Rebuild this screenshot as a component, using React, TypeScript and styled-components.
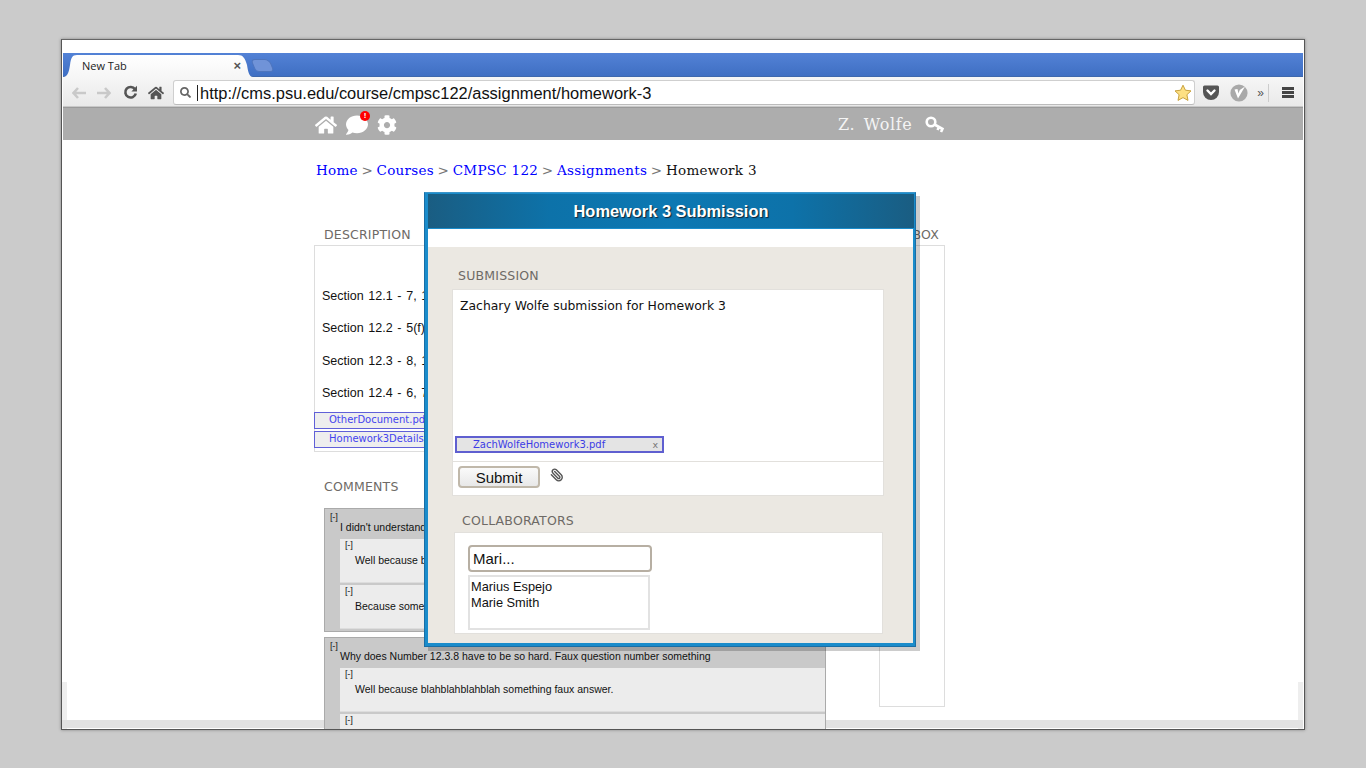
import React from "react";
import styled, { createGlobalStyle } from "styled-components";
import { FaHome, FaComment, FaCog, FaSearch } from "react-icons/fa";
import { Paperclip } from "lucide-react";

const sans = `"Liberation Sans", Arial, sans-serif`;
const deja = `"DejaVu Sans", Verdana, sans-serif`;
const serif = `"DejaVu Serif", Georgia, serif`;

const Global = createGlobalStyle`
  html, body { margin: 0; padding: 0; height: 100%; overflow: hidden; }
  body { background: #cbcbcb; font-family: ${sans}; }
  * { box-sizing: border-box; }
`;
const Desktop = styled.div`
  width: 1366px; height: 768px; padding: 39px 61px 0; overflow: hidden;
`;
const Window = styled.div`
  width: 1244px; height: 691px; background: #fff; border: 1px solid #555;
  border-top-color: #666; box-shadow: 0 0 3px rgba(0,0,0,.35);
  display: flex; flex-direction: column; overflow: hidden; padding: 13px 1px 0 1px;
`;
const TabStrip = styled.div`
  height: 24px; flex: none; display: flex; align-items: flex-end;
  background: linear-gradient(#5382d6, #3f6fc3); border-bottom: 1px solid #3e68ad;
`;
const Tab = styled.div`
  width: 190px; height: 22px; margin-bottom: -1px; display: flex; align-items: center; justify-content: space-between;
  padding: 0 12px 2px 19px; background: linear-gradient(#ffffff, #f6f6f6);
  clip-path: path("M0 22 C5 22 6 16 7 10 C8 3 9 0 14 0 L175 0 C180 0 182 3 184 10 C185 16 186 22 190 22 Z");
  font: 11px "Open Sans", ${deja}; color: #222;
`;
const TabClose = styled.span`font: bold 13px ${sans}; color: #555;`;
const NewTab = styled.div`
  width: 19px; height: 13px; margin: 0 0 4px 0; background: #7093d8; border: 1px solid #4e75bd;
  border-radius: 4px 5px 4px 4px; transform: skewX(22deg);
`;
const Toolbar = styled.div`
  height: 30px; flex: none; display: flex; align-items: center; padding: 2px 0 0 8px;
  background: linear-gradient(#f6f6f6, #e9e9e9);
  border-bottom: 1px solid #c8c8c8;
`;
const ToolSlot = styled.div<{ $w: number }>`
  width: ${p => p.$w}px; flex: none; display: flex; align-items: center; justify-content: center;
`;
const Omnibox = styled.div`
  width: 1022px; height: 25px; flex: none; background: #fff; border: 1px solid #cfcfcf;
  border-bottom-color: #bcbcbc; border-radius: 3px; display: flex; align-items: center; padding: 0 2px 0 6px;
`;
const SearchIcon = styled(FaSearch)`
  color: #666; font-size: 11px; flex: none;
`;
const Url = styled.div`
  flex: 1; margin-left: 6px; padding-left: 2px; border-left: 1px solid #222; height: 16px;
  font: 16.45px/16px ${sans}; color: #111; white-space: nowrap;
`;
const SiteNav = styled.div`
  height: 33px; flex: none; display: flex; align-items: center; background: #adadad;
  border-top: 1px solid #9a9a9a; padding-left: 252px; color: #fff;
`;
const NavIcons = styled.div`
  width: 523px; display: flex; align-items: center; gap: 9px; font-size: 22px; position: relative; top: 1px;
`;
const ChatWrap = styled.div`position: relative; display: flex; width: 22px;`;
const Badge = styled.span`
  position: absolute; right: -2px; top: -3px; width: 10px; height: 10px; border-radius: 50%;
  background: #f00; color: #fff; font: bold 8px/10px ${sans}; text-align: center;
`;
const UserName = styled.div`
  font: 16px ${serif}; word-spacing: 3px; color: #f4f4f4; letter-spacing: .6px; position: relative; top: 0;
`;
const KeySlot = styled.div`margin-left: 13px; display: flex; position: relative; top: 1px;`;
const Page = styled.div`
  flex: 1; min-height: 0; overflow: hidden; margin-left: -1px; padding: 0 0 0 252px;
  background:
    linear-gradient(#e2e2e2, #e2e2e2) 0 calc(100% - 1px) / 100% 8px no-repeat,
    linear-gradient(#eeeeee, #eeeeee) 0 bottom / 5px 47px no-repeat,
    linear-gradient(#eeeeee, #eeeeee) right bottom / 5px 47px no-repeat,
    #fff;
`;
const Crumbs = styled.div`
  padding: 22px 0 0 2px; height: 87px; font: 13.5px/17px ${serif}; color: #777; letter-spacing: .3px;
`;
const Crumb = styled.a`color: #00f;`;
const Sep = styled.span`word-spacing: -1.1px;`;
const Current = styled.span`color: #111;`;
const Columns = styled.div`
  display: grid; grid-template-columns: 552px 66px; column-gap: 13px; width: 631px;
`;
const SectionLabel = styled.div<{ $pad?: number }>`
  font: 12.5px/16px ${deja}; color: #6e6a66; padding-left: ${p => p.$pad ?? 10}px; text-transform: uppercase; letter-spacing: .2px;
`;
const Description = styled.div`
  margin-top: 2px; height: 207px; border: 1px solid #ddd; padding-top: 32px;
`;
const Problem = styled.p`
  margin: 0 0 0 7px; height: 32.4px; font: 12.5px/36px ${sans}; word-spacing: 1.2px; color: #111;
`;
const FileRow = styled.div`
  height: 17px; margin: 0 0 2px -1px; background: #eee; border: 1px solid #6060d8; padding-left: 14px;
  font: 10px/14px ${deja}; color: #4444ee; white-space: nowrap;
`;
const Files = styled.div`margin-top: 4px;`;
const Side = styled.div``;
const SideBox = styled.div`
  margin-top: 2px; height: 462px; border: 1px solid #ddd;
`;
const CommentsLabel = styled(SectionLabel)`margin-top: 27px;`;
const CommentList = styled.div`
  margin: 13px 0 0 10px; width: 502px; display: flex; flex-direction: column; gap: 5px;
`;
const Thread = styled.div`
  background: #c9c9c9; border: 1px solid #aaa; padding: 2px 0 2px 5px;
  font: 10.5px/13px ${sans}; color: #111;
`;
const Toggle = styled.div`font: 9.5px/11px ${sans}; color: #222; letter-spacing: -.3px;`;
const Question = styled.div`padding-left: 10px; margin-top: -1px; height: 13px; white-space: nowrap;`;
const Replies = styled.div`
  margin: 5px 0 0 10px; display: flex; flex-direction: column; gap: 2px;
`;
const Reply = styled.div`
  height: 44px; background: #ececec; padding: 0 0 0 5px; border-bottom: 1px solid #ddd;
`;
const ReplyText = styled.div`padding: 4px 0 0 10px; white-space: nowrap;`;

const Modal = styled.div`
  position: absolute; left: 424px; top: 192px; width: 492px; height: 455px;
  border: 1px solid #1a6ea5; border-top-color: #3b94c8; background: #1a8ccb; padding: 1px 2px 3px 3px;
  box-shadow: 4px 4px 0 rgba(0,0,0,.2); display: flex; flex-direction: column;
`;
const ModalHeader = styled.div`
  height: 34px; flex: none; margin-right: -1px; display: flex; align-items: center; justify-content: center;
  background: linear-gradient(90deg, #1a5d82, #0d72a9 25%, #0c78b3 50%, #0d72a9 75%, #1a5d82);
  font: bold 16.4px ${sans}; color: #fff; text-shadow: 1px 1px 1px #123;
`;
const ModalBody = styled.div`
  flex: 1; background: #ebe8e2; border-top: 18px solid #fff; padding: 21px 0 0 24px; margin-top: 1px;
`;
const ModalLabel = styled(SectionLabel)``;
const SubmitCard = styled.div`
  margin-top: 5px; width: 432px; height: 207px; display: flex; flex-direction: column;
  background: #fff; border: 1px solid #e2e0dc;
`;
const Editor = styled.div`
  height: 171px; flex: none; padding: 8px 0 0 7px; width: 430px; position: relative;
  font: 12.4px/16px ${deja}; color: #111;
`;
const Attachment = styled.div`
  position: absolute; left: 2px; bottom: 8px; width: 209px; height: 17px; background: #e4e4e4;
  border: 2px solid #5f5fd0; display: flex; justify-content: space-between; padding: 0 4px 0 16px;
  font: 10px/13px ${deja}; color: #3c3ce6;
`;
const Remove = styled.span`color: #777; font: 9.5px/13px ${deja};`;
const SubmitRow = styled.div`
  flex: 1; width: 431px; display: flex; align-items: flex-start; gap: 10px; border-top: 1px solid #e2e0dc;
  padding: 4px 0 0 5px; border-right: 1px solid #e2e0dc; margin-right: -1px;
`;
const SubmitButton = styled.button`
  width: 82px; height: 22px; padding: 0; background: linear-gradient(#fafafa, #e8e8e8);
  border: 2px solid #c0b8aa; border-radius: 4px; font: 15px ${sans}; color: #111;
`;
const Clip = styled(Paperclip)`
  color: #555; margin-top: 2px; transform: scaleX(-1);
`;
const CollabLabel = styled(SectionLabel)`margin-top: 17px; padding-left: 10px;`;
const CollabCard = styled.div`
  margin: 3px 0 0 2px; width: 429px; height: 102px; background: #fff; border: 1px solid #e2e0dc; padding: 12px 0 0 13px;
`;
const NameInput = styled.div`
  width: 184px; height: 27px; border: 2px solid #b7afa3; border-radius: 4px; padding-left: 3px;
  font: 15px/23px ${sans}; color: #111;
`;
const Suggestions = styled.div`
  margin-top: 3px; width: 182px; height: 55px; border: 2px solid #e2e2e2; padding: 2px 0 0 1px;
  font: 12.8px/16px ${sans}; color: #111;
`;

const Back = ({ c }: { c: string }) => (
  <svg width="16" height="14" viewBox="0 0 16 14"><path d="M7 2 L2.5 7 L7 12 M3 7 H15" fill="none" stroke={c} strokeWidth="2.6" /></svg>
);
const Forward = ({ c }: { c: string }) => (
  <svg width="16" height="14" viewBox="0 0 16 14"><path d="M9 2 L13.5 7 L9 12 M13 7 H1" fill="none" stroke={c} strokeWidth="2.6" /></svg>
);
const Reload = () => (
  <svg width="15" height="15" viewBox="0 0 15 15"><path d="M12 4.2 A5.3 5.3 0 1 0 12.8 8.5" fill="none" stroke="#555" strokeWidth="2.6" /><path d="M14 .8 V6.4 H8.4 Z" fill="#555" /></svg>
);
const Star = () => (
  <svg width="18" height="18" viewBox="0 0 18 18"><path d="M9 1.2 L11.4 6.2 L17 6.9 L12.9 10.7 L14 16.4 L9 13.6 L4 16.4 L5.1 10.7 L1 6.9 L6.6 6.2 Z" fill="#fde083" stroke="#c9a23e" strokeWidth="1" strokeLinejoin="round" /></svg>
);
const Pocket = () => (
  <svg width="18" height="16" viewBox="0 0 18 16"><path d="M1 2 Q1 .5 2.5 .5 H15.5 Q17 .5 17 2 V7 A8 8 0 0 1 1 7 Z" fill="#555" /><path d="M5.5 5.5 L9 9 L12.5 5.5" fill="none" stroke="#fff" strokeWidth="2.4" strokeLinecap="round" /></svg>
);
const VBadge = () => (
  <svg width="18" height="18" viewBox="0 0 18 18"><circle cx="9" cy="9" r="8.6" fill="#a9a9a9" /><path d="M4.5 5.5 L8 14.5 L15 2.5 L9.8 6 L8.4 9.5 L7.5 5 Z" fill="#fff" /></svg>
);
const KeyGlyph = () => (
  <svg width="20" height="18" viewBox="0 0 20 18">
    <circle cx="6" cy="6" r="4.3" fill="none" stroke="#fff" strokeWidth="2.6" />
    <path d="M9.5 8.5 L18.5 13.5 M14 11 L12.5 14 M17.5 13 L16 16" fill="none" stroke="#fff" strokeWidth="2.6" />
  </svg>
);
const Overflow = styled.span`font: 12px ${sans}; color: #555; padding-right: 4px; border-right: 1px solid #ccc; line-height: 18px;`;
const Menu = styled.span`
  width: 12px; height: 11px; border-top: 3px solid #444; border-bottom: 3px solid #444; position: relative;
  &::after { content: ""; position: absolute; left: 0; right: 0; top: 1px; height: 3px; background: #444; }
`;

const ThreadBlock = ({ q, replies }: { q: string; replies: string[] }) => (
  <Thread>
    <Toggle>[-]</Toggle>
    <Question>{q}</Question>
    <Replies>
      {replies.map((r, i) => (
        <Reply key={i}>
          <Toggle>[-]</Toggle>
          <ReplyText>{r}</ReplyText>
        </Reply>
      ))}
    </Replies>
  </Thread>
);

export default function App() {
  return (
    <Desktop>
      <Global />
      <Window>
        <TabStrip>
          <Tab>New Tab<TabClose>×</TabClose></Tab>
          <NewTab />
        </TabStrip>
        <Toolbar>
          <ToolSlot $w={16}><Back c="#c9c9c9" /></ToolSlot>
          <ToolSlot $w={34}><Forward c="#c9c9c9" /></ToolSlot>
          <ToolSlot $w={18}><Reload /></ToolSlot>
          <ToolSlot $w={34}><FaHome color="#555" size={16} /></ToolSlot>
          <Omnibox>
            <SearchIcon />
            <Url>http://cms.psu.edu/course/cmpsc122/assignment/homework-3</Url>
            <Star />
          </Omnibox>
          <ToolSlot $w={32}><Pocket /></ToolSlot>
          <ToolSlot $w={24}><VBadge /></ToolSlot>
          <ToolSlot $w={24}><Overflow>»</Overflow></ToolSlot>
          <ToolSlot $w={26}><Menu /></ToolSlot>
        </Toolbar>
        <SiteNav>
          <NavIcons>
            <FaHome />
            <ChatWrap><FaComment /><Badge>!</Badge></ChatWrap>
            <FaCog style={{ fontSize: 20 }} />
          </NavIcons>
          <UserName>Z. Wolfe</UserName>
          <KeySlot><KeyGlyph /></KeySlot>
        </SiteNav>
        <Page>
          <Crumbs>
            <Crumb>Home</Crumb><Sep> &gt; </Sep><Crumb>Courses</Crumb><Sep> &gt; </Sep><Crumb>CMPSC 122</Crumb><Sep> &gt; </Sep><Crumb>Assignments</Crumb><Sep> &gt; </Sep><Current>Homework 3</Current>
          </Crumbs>
          <Columns>
            <div>
              <SectionLabel>Description</SectionLabel>
              <Description>
                <Problem>Section 12.1 - 7, 13, 22</Problem>
                <Problem>Section 12.2 - 5(f), 9</Problem>
                <Problem>Section 12.3 - 8, 12, 19</Problem>
                <Problem>Section 12.4 - 6, 7, 11</Problem>
                <Files>
                  <FileRow>OtherDocument.pdf</FileRow>
                  <FileRow>Homework3Details.pdf</FileRow>
                </Files>
              </Description>
              <CommentsLabel>Comments</CommentsLabel>
              <CommentList>
                <ThreadBlock
                  q="I didn't understand how to do Number 12.1.7. Faux question something"
                  replies={[
                    "Well because blahblahblahblah something faux answer.",
                    "Because something something faux answer.",
                  ]}
                />
                <ThreadBlock
                  q="Why does Number 12.3.8 have to be so hard. Faux question number something"
                  replies={["Well because blahblahblahblah something faux answer.", ""]}
                />
              </CommentList>
            </div>
            <Side>
              <SectionLabel $pad={20}>Inbox</SectionLabel>
              <SideBox />
            </Side>
          </Columns>
        </Page>
      </Window>
      <Modal>
        <ModalHeader>Homework 3 Submission</ModalHeader>
        <ModalBody>
          <ModalLabel $pad={6}>Submission</ModalLabel>
          <SubmitCard>
            <Editor>
              Zachary Wolfe submission for Homework 3
              <Attachment>ZachWolfeHomework3.pdf<Remove>x</Remove></Attachment>
            </Editor>
            <SubmitRow>
              <SubmitButton>Submit</SubmitButton>
              <Clip size={14} strokeWidth={2.4} />
            </SubmitRow>
          </SubmitCard>
          <CollabLabel>Collaborators</CollabLabel>
          <CollabCard>
            <NameInput>Mari...</NameInput>
            <Suggestions>Marius Espejo<br />Marie Smith</Suggestions>
          </CollabCard>
        </ModalBody>
      </Modal>
    </Desktop>
  );
}
